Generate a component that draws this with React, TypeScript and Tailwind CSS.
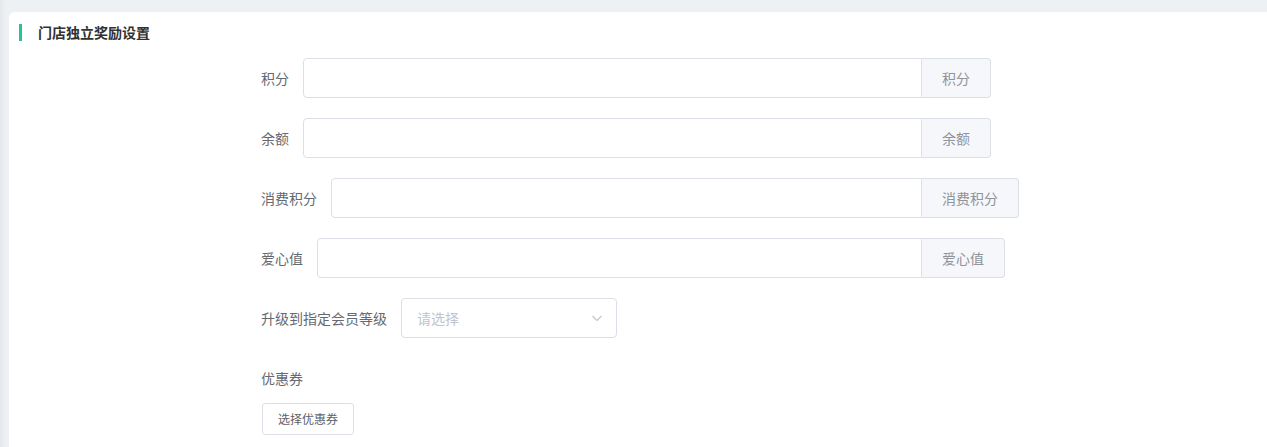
import React from 'react'

const font = { fontFamily: '"Noto Sans CJK SC", "Noto Sans", sans-serif' }

interface Field {
  label: string
  unit: string
}

const fields: Field[] = [
  { label: '积分', unit: '积分' },
  { label: '余额', unit: '余额' },
  { label: '消费积分', unit: '消费积分' },
  { label: '爱心值', unit: '爱心值' },
]

const App: React.FC = () => {
  return (
    <div
      className="w-full h-[447px] overflow-hidden bg-[#eef1f4] pt-[12px] pl-[9px] bg-gradient-to-r from-[#e4e7eb] via-[#eef1f4] to-[#eef1f4] bg-[length:12px_100%] bg-no-repeat"
      style={font}
    >
      <div className="h-full bg-white rounded-tl-[6px] pl-[10px] pt-[12px]">
        <div className="flex items-center h-[17px]">
          <div className="w-[3px] h-[17px] bg-[#26c29c]" />
          <span className="ml-[16px] text-[14px] leading-none font-bold text-[#303133] -mt-[2px]">
            门店独立奖励设置
          </span>
        </div>

        <div className="ml-[242px] mt-[17px] flex flex-col">
          {fields.map((f) => (
            <div key={f.label} className="flex items-center h-10 mb-5">
              <div className="w-[661px] flex items-center">
                <label className="text-[14px] text-[#66696f] pr-[14px] whitespace-nowrap">
                  {f.label}
                </label>
                <div className="flex-1 h-10 border border-[#dcdfe6] rounded-l-[4px] bg-white" />
              </div>
              <div className="h-10 px-5 flex items-center border-y border-r border-[#dcdfe6] rounded-r-[4px] bg-[#f5f7fa] text-[14px] text-[#909399] whitespace-nowrap">
                {f.unit}
              </div>
            </div>
          ))}

          <div className="flex items-center h-10 mb-5">
            <label className="text-[14px] text-[#66696f] pr-[14px] whitespace-nowrap">
              升级到指定会员等级
            </label>
            <div className="w-[216px] h-10 border border-[#dcdfe6] rounded-[4px] flex items-center justify-between pl-[15px] pr-[12px]">
              <span className="text-[14px] text-[#c0c4cc]">请选择</span>
              <svg width="14" height="14" viewBox="0 0 14 14" fill="none">
                <path d="M2.5 5l4.5 4.5L11.5 5" stroke="#c0c4cc" strokeWidth="1.1" />
              </svg>
            </div>
          </div>

          <div className="h-10 flex items-center text-[14px] text-[#66696f]">优惠券</div>
          <div className="mt-[5px]">
            <button className="h-8 px-[15px] border border-[#dcdfe6] rounded-[3px] bg-white text-[12px] text-[#606266] ml-px">
              选择优惠券
            </button>
          </div>
        </div>
      </div>
    </div>
  )
}

export default App
